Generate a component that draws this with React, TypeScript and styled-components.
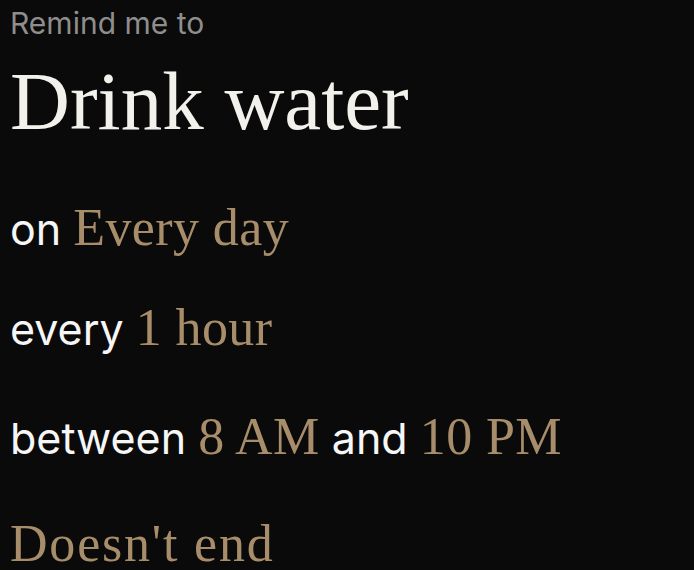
import * as React from 'react';
import styled, { createGlobalStyle } from 'styled-components';

const GlobalStyle = createGlobalStyle`
  html, body {
    margin: 0;
    padding: 0;
    background: #0a0a0a;
  }
`;

const sans = `Inter, "Noto Sans", sans-serif`;
const serif = `"Liberation Serif", "DejaVu Serif", serif`;
const gold = '#a78d6a';

const Screen = styled.div`
  width: 694px;
  height: 570px;
  overflow: hidden;
  background: #0a0a0a;
  padding: 0 10px;
  box-sizing: border-box;
  display: flex;
  flex-direction: column;
`;

const Label = styled.div`
  font-family: ${sans};
  font-size: 30px;
  line-height: 44px;
  color: #8e8e8e;
  margin-top: 1px;
`;

const Title = styled.div`
  font-family: ${serif};
  font-size: 83px;
  line-height: 96px;
  color: #f3f1eb;
  margin-top: 8px;
`;

const Row = styled.div<{ $gap?: number }>`
  font-family: ${sans};
  font-size: 43px;
  line-height: 56px;
  color: #f6f6f6;
  margin-top: ${({ $gap }) => $gap ?? 46}px;
  white-space: nowrap;
`;

const Value = styled.span<{ $spacing?: number }>`
  font-family: ${serif};
  font-size: 52px;
  color: ${gold};
  letter-spacing: ${({ $spacing }) => $spacing ?? 0.4}px;
`;

export default function App() {
  return (
    <>
      <GlobalStyle />
      <Screen>
        <Label>Remind me to</Label>
        <Title>Drink water</Title>
        <Row $gap={51}>
          on <Value>Every day</Value>
        </Row>
        <Row $gap={43}>
          every <Value>1 hour</Value>
        </Row>
        <Row $gap={52}>
          between <Value>8 AM</Value> and <Value>10 PM</Value>
        </Row>
        <Row $gap={50}>
          <Value $spacing={1.8}>Doesn't end</Value>
        </Row>
      </Screen>
    </>
  );
}
